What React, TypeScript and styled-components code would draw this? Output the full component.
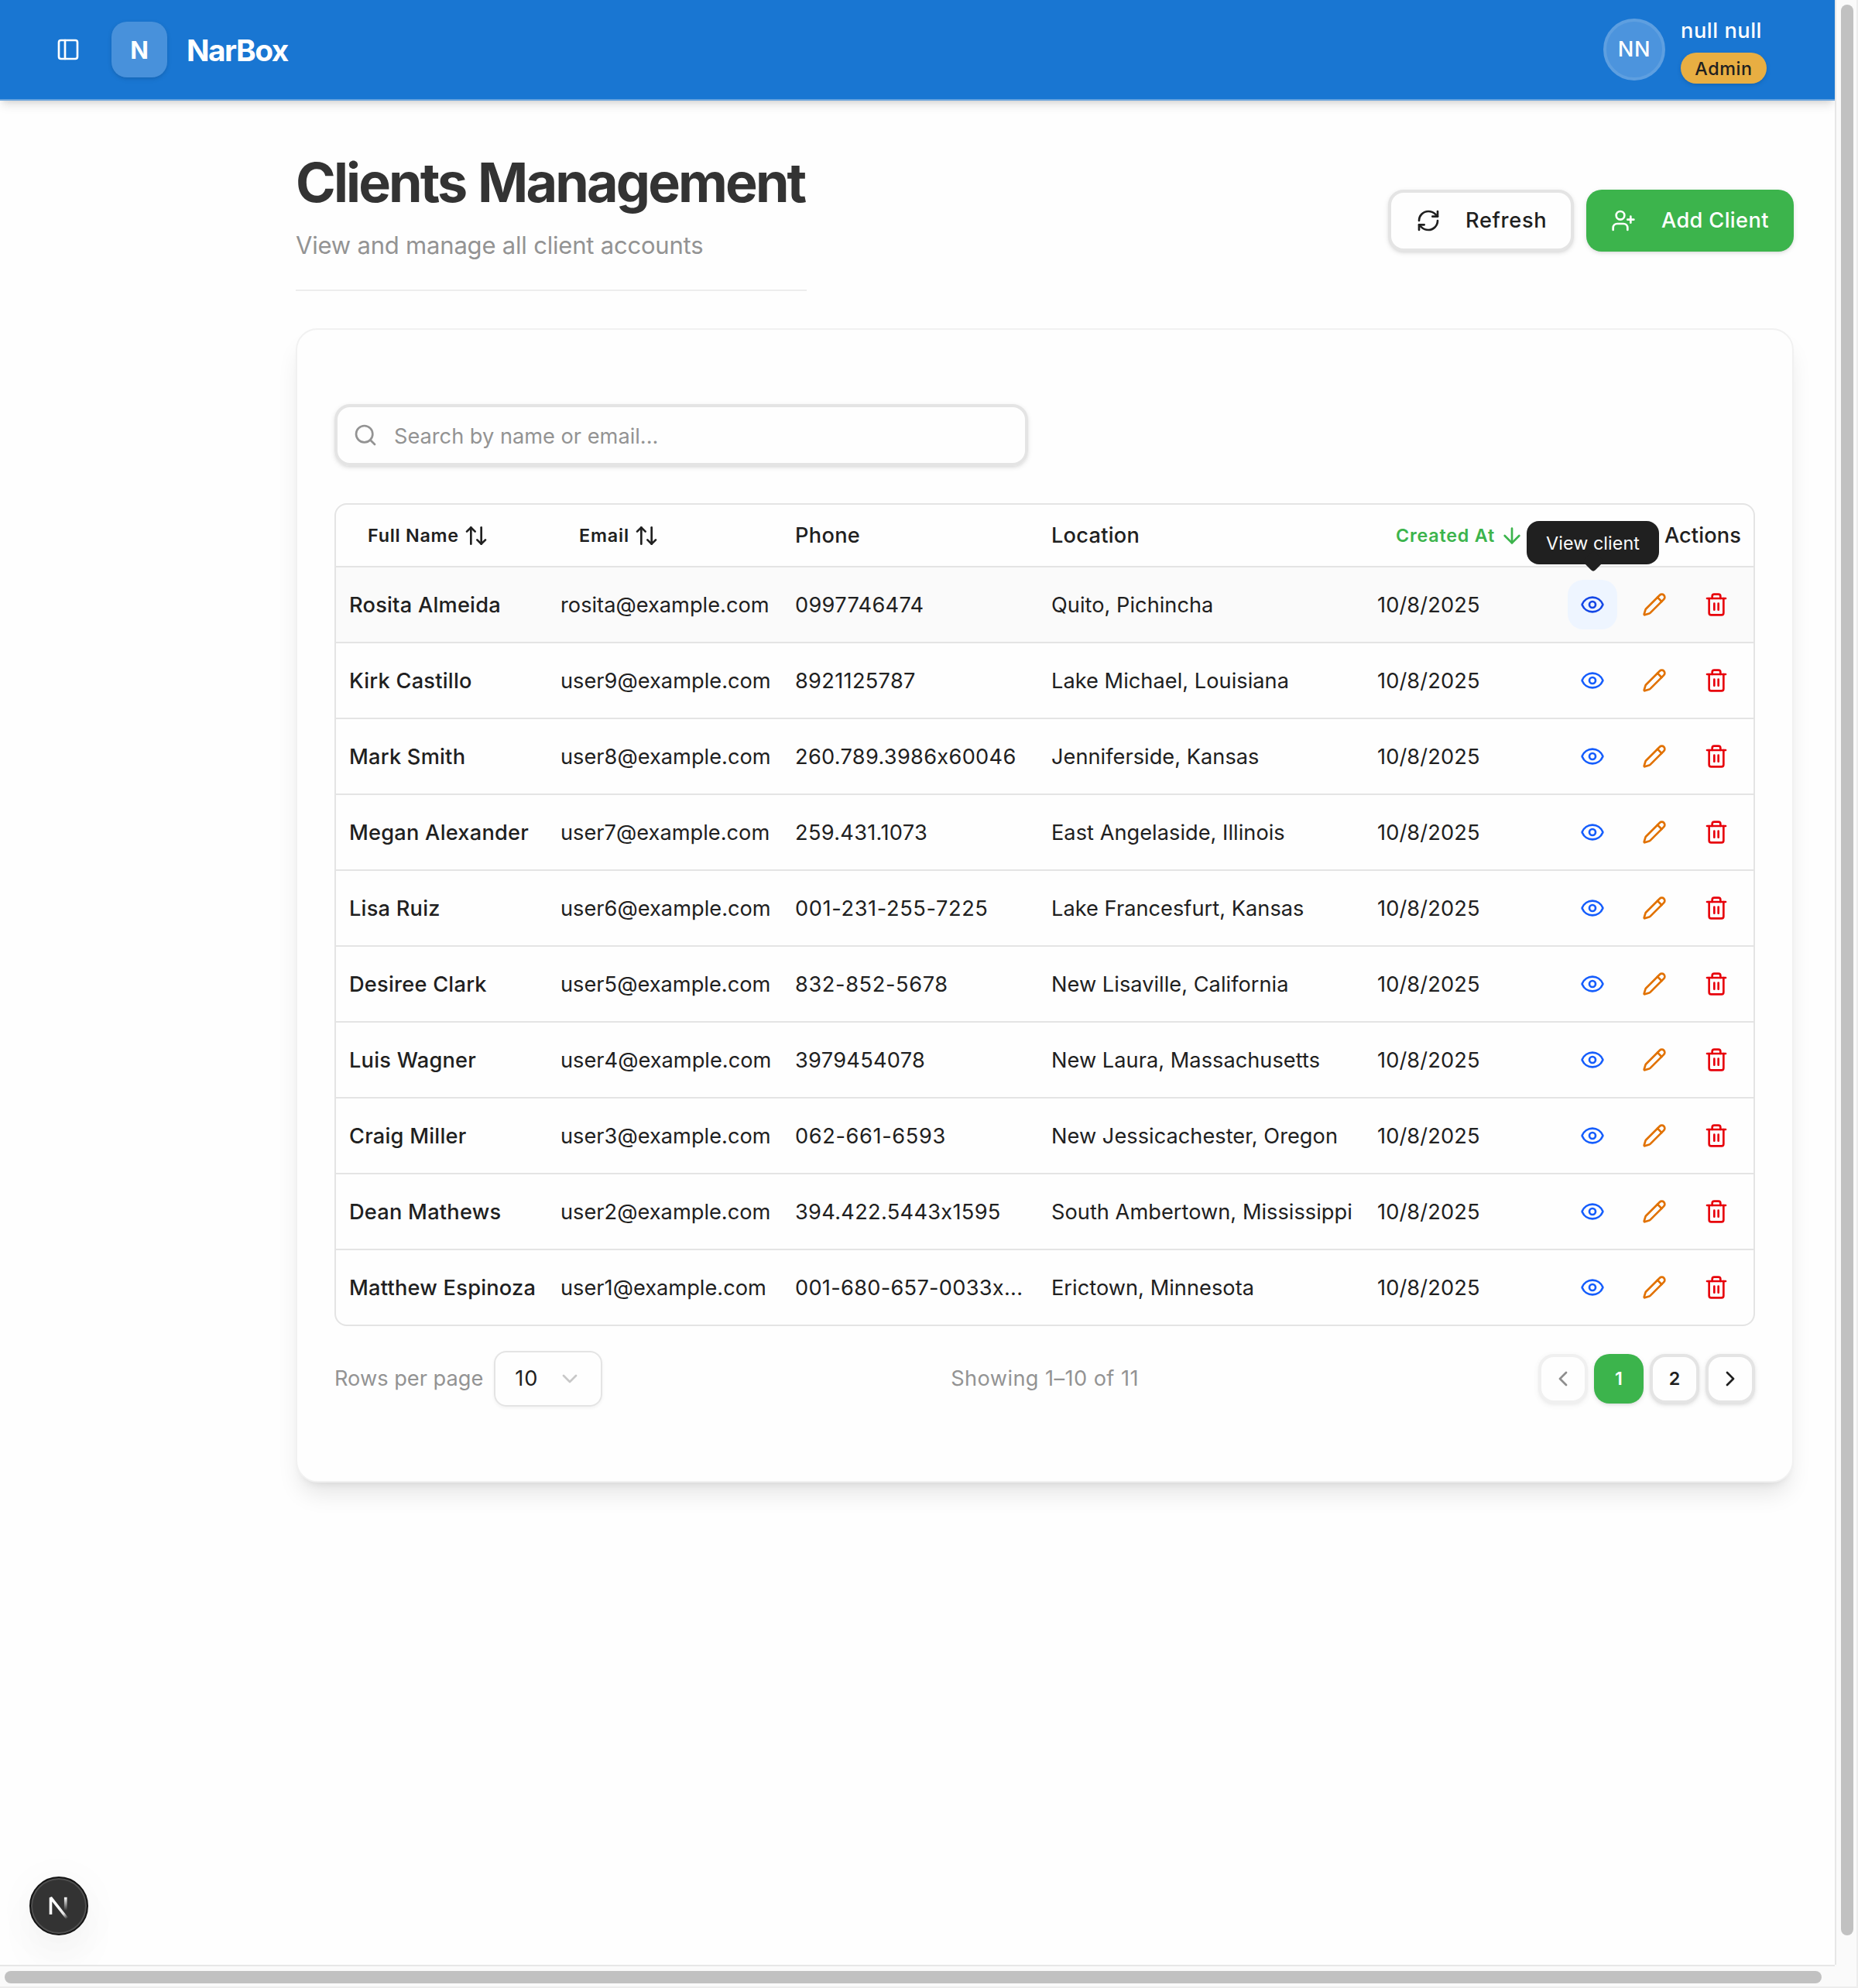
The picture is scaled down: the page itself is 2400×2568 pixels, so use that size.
import React from "react";
import styled, { createGlobalStyle } from "styled-components";
import {
  ArrowDown,
  ArrowUpDown,
  ChevronDown,
  ChevronLeft,
  ChevronRight,
  Eye,
  PanelLeft,
  Pencil,
  RefreshCw,
  Search,
  Trash2,
  UserPlus,
} from "lucide-react";

const c = {
  primary: "#1976d2",
  green: "#3cb44c",
  text: "#202020",
  heading: "#333333",
  muted: "#939393",
  border: "#e4e4e4",
  page: "#fefefe",
};

const GlobalStyle = createGlobalStyle`
  *, *::before, *::after { box-sizing: border-box; }
  body { margin: 0; background: ${c.page}; }
  button, input { font: inherit; letter-spacing: inherit; color: inherit; margin: 0; }
`;

const Shell = styled.div`
  display: grid;
  grid-template-columns: 2370px 30px;
  grid-template-rows: 2538px 30px;
  width: 2400px;
  height: 2568px;
  overflow: hidden;
  background: ${c.page};
  color: ${c.text};
  font-family: Inter, "Liberation Sans", sans-serif;
  font-size: 27.2px;
  line-height: 40px;
  white-space: nowrap;
`;

const Viewport = styled.div`
  position: relative;
  overflow: hidden;
`;

const Text = styled.span<{ $ls?: number }>`
  letter-spacing: ${(p) => p.$ls ?? 0}px;
`;

/* ---------- top bar ---------- */

const TopBar = styled.header`
  position: relative;
  display: flex;
  align-items: center;
  height: 130px;
  padding: 0 88px 0 72px;
  background: ${c.primary};
  border-bottom: 2px solid #68a3dd;
  color: #fff;
  box-shadow: 0 8px 12px -2px rgba(0, 0, 0, 0.1), 0 4px 8px -4px rgba(0, 0, 0, 0.12);
`;

const Logo = styled.div`
  display: grid;
  place-items: center;
  width: 72px;
  height: 72px;
  margin: 0 25px 0 40px;
  padding-top: 1px;
  border-radius: 20px;
  background: #4891db;
  box-shadow: 0 2px 6px rgba(0, 0, 0, 0.1), 0 2px 4px -2px rgba(0, 0, 0, 0.1);
  font-size: 31px;
  font-weight: 650;
`;

const Brand = styled.div`
  flex: 1;
  font-size: 38.8px;
  font-weight: 700;
  letter-spacing: -1.5px;
  line-height: 56px;
  padding-top: 2px;
`;

const Avatar = styled.div`
  display: grid;
  place-items: center;
  width: 80px;
  height: 80px;
  margin-right: 20px;
  border: 4px solid #5e9fe0;
  border-radius: 50%;
  background: #4c94dd;
  font-weight: 540;
`;

const Account = styled.div`
  display: flex;
  flex-direction: column;
  align-items: flex-start;
  gap: 8px;
  font-weight: 540;
`;

const AccountName = styled.div`
  line-height: 40px;
`;

const Badge = styled.div`
  width: 111px;
  height: 40px;
  border-radius: 20px;
  background: #e8ae42;
  color: ${c.text};
  box-shadow: 0 2px 6px rgba(0, 0, 0, 0.1), 0 2px 4px -2px rgba(0, 0, 0, 0.1);
  font-size: 23.3px;
  letter-spacing: 0.6px;
  line-height: 41px;
  text-align: center;
`;

/* ---------- page ---------- */

const Main = styled.main`
  padding: 64px 53px 0 382px;
`;

const PageHead = styled.div`
  display: flex;
  align-items: center;
  justify-content: space-between;
`;

const TitleBlock = styled.div`
  width: 660px;
  padding-bottom: 32px;
  border-bottom: 2px solid #ededed;
`;

const Title = styled.h1`
  margin: 0;
  color: ${c.heading};
  font-size: 70px;
  font-weight: 700;
  letter-spacing: -2.85px;
  line-height: 84px;
  word-spacing: 2px;
`;

const Subtitle = styled.p`
  margin: 14px 0 0;
  color: ${c.muted};
  font-size: 31px;
  letter-spacing: -0.2px;
  line-height: 50px;
`;

const Actions = styled.div`
  display: flex;
  gap: 16px;
`;

const Button = styled.button<{ $primary?: boolean }>`
  display: flex;
  align-items: center;
  gap: ${(p) => (p.$primary ? 33 : 32)}px;
  width: ${(p) => (p.$primary ? 268 : 240)}px;
  height: 80px;
  padding: 0 32px;
  border: ${(p) => (p.$primary ? "0" : `4px solid ${c.border}`)};
  border-radius: 20px;
  background: ${(p) => (p.$primary ? c.green : c.page)};
  color: ${(p) => (p.$primary ? "#fff" : c.text)};
  box-shadow: 0 2px 6px rgba(0, 0, 0, 0.1), 0 2px 4px -2px rgba(0, 0, 0, 0.1);
  font-weight: 550;

  svg { flex: none; }
`;

const Card = styled.section`
  margin-top: 48px;
  padding: 96px 48px;
  border: 2px solid #f1f1f1;
  border-radius: 28px;
  background: ${c.page};
  box-shadow: 0 20px 30px -6px rgba(0, 0, 0, 0.1), 0 8px 12px -8px rgba(0, 0, 0, 0.1);
`;

const SearchBox = styled.label`
  display: flex;
  align-items: center;
  gap: 21px;
  width: 896px;
  height: 80px;
  padding: 0 20px;
  border: 4px solid ${c.border};
  border-radius: 20px;
  color: ${c.muted};
  box-shadow: 0 2px 6px rgba(0, 0, 0, 0.1), 0 2px 4px -2px rgba(0, 0, 0, 0.1);
`;

const SearchInput = styled.input`
  flex: 1;
  padding: 3px 0 0;
  border: 0;
  outline: 0;
  background: transparent;

  &::placeholder { color: ${c.muted}; opacity: 1; }
`;

/* ---------- table ---------- */

const Table = styled.div`
  margin-top: 48px;
  border: 2px solid ${c.border};
  border-radius: 16px;
`;

const Row = styled.div<{ $active?: boolean }>`
  display: grid;
  grid-template-columns: 273px 303px 331px 421px 1fr auto;
  align-items: center;
  height: 98px;
  padding-left: 1px;
  border-bottom: 2px solid ${c.border};
  background: ${(p) => (p.$active ? "#fafafa" : "transparent")};

  &:last-child { height: 96px; border-bottom: 0; }
`;

const HeadRow = styled(Row)`
  height: 81px;
  padding-top: 1px;
  font-weight: 480;
`;

const Cell = styled.div<{ $strong?: boolean; $ls?: number }>`
  padding: 1px 0 0 16px;
  font-weight: ${(p) => (p.$strong ? 480 : 400)};
  letter-spacing: ${(p) => p.$ls ?? 0}px;
`;

const HeadCell = styled.div<{ $ls?: number }>`
  padding: 0 16px;
  letter-spacing: ${(p) => p.$ls ?? 0}px;
`;

const SortButton = styled.button<{ $sorted?: boolean; $ls: number }>`
  display: flex;
  align-items: center;
  gap: 6px;
  padding: 0 24px;
  border: 0;
  background: none;
  color: ${(p) => (p.$sorted ? c.green : c.text)};
  font-size: 23.3px;
  font-weight: 560;
  letter-spacing: ${(p) => p.$ls}px;
`;

const RowActions = styled.div`
  display: flex;
  gap: 16px;
  padding-right: 16px;
`;

const IconButton = styled.button<{ $tone: string; $hover?: boolean }>`
  position: relative;
  display: grid;
  place-items: center;
  width: 64px;
  height: 64px;
  padding: 0;
  border: 0;
  border-radius: 20px;
  background: ${(p) => (p.$hover ? "#eef5ff" : "transparent")};
  color: ${(p) => p.$tone};
`;

const Tooltip = styled.span`
  position: absolute;
  bottom: 84px;
  left: 33px;
  width: 171px;
  height: 56px;
  margin-left: -86px;
  border-radius: 16px;
  background: ${c.text};
  color: #fafafa;
  font-size: 23.3px;
  font-weight: 400;
  letter-spacing: 0.07px;
  line-height: 57px;
  text-align: center;

  &::after {
    content: "";
    position: absolute;
    bottom: -6px;
    left: 50%;
    width: 20px;
    height: 20px;
    margin-left: -10px;
    border-radius: 4px;
    background: ${c.text};
    transform: rotate(45deg);
  }
`;

/* ---------- pagination ---------- */

const Footer = styled.div`
  display: grid;
  grid-template-columns: 1fr auto 1fr;
  align-items: center;
  margin-top: 32px;
  color: ${c.muted};
`;

const PageSize = styled.div`
  display: flex;
  align-items: center;
  gap: 14px;
`;

const Select = styled.div`
  display: flex;
  align-items: center;
  justify-content: space-between;
  width: 140px;
  height: 72px;
  padding: 0 24px 0 25px;
  border: 2px solid ${c.border};
  border-radius: 16px;
  color: ${c.text};
  box-shadow: 0 2px 4px rgba(0, 0, 0, 0.05);

  svg { color: #c8c8c8; }
`;

const Pager = styled.div`
  display: flex;
  justify-content: flex-end;
  gap: 8px;
`;

const PageButton = styled.button<{ $current?: boolean }>`
  display: grid;
  place-items: center;
  width: 64px;
  height: 64px;
  padding: 0;
  border: ${(p) => (p.$current ? "0" : `4px solid ${c.border}`)};
  border-radius: 20px;
  background: ${(p) => (p.$current ? c.green : c.page)};
  color: ${(p) => (p.$current ? "#fff" : c.text)};
  box-shadow: 0 2px 6px rgba(0, 0, 0, 0.1), 0 2px 4px -2px rgba(0, 0, 0, 0.1);
  font-size: 23.3px;
  font-weight: 560;

  &:disabled { opacity: 0.5; }
`;

/* ---------- window chrome ---------- */

const DevBadge = styled.div`
  position: absolute;
  left: 38px;
  bottom: 38px;
  width: 76px;
  height: 76px;
  border: 2px solid #151515;
  border-radius: 50%;
  background: #333;
  box-shadow: inset 0 0 0 2px #505050, 0 32px 64px -16px rgba(0, 0, 0, 0.1),
    0 6px 60px rgba(0, 0, 0, 0.04);

  svg { display: block; margin: -2px; }
`;

const VerticalTrack = styled.div`
  padding: 6px 4px 0 6px;
  border: solid #e7e7e7;
  border-width: 0 2px;
  border-right-color: #ededed;
  background: #fafafa;
`;

const HorizontalTrack = styled.div`
  padding: 6px 0 0 6px;
  border: solid #e7e7e7;
  border-width: 2px 0;
  border-bottom-color: #ededed;
  background: #fafafa;
`;

const Corner = styled.div`
  border: solid #ededed;
  border-width: 0 2px 2px 0;
  background: #fafafa;
`;

const Thumb = styled.div<{ $w: number; $h: number }>`
  width: ${(p) => p.$w}px;
  height: ${(p) => p.$h}px;
  border-radius: 8px;
  background: #c1c1c1;
`;

type Client = {
  name: string;
  email: string;
  phone: string;
  location: string;
};

const clients: Client[] = [
  { name: "Rosita Almeida", email: "rosita@example.com", phone: "0997746474", location: "Quito, Pichincha" },
  { name: "Kirk Castillo", email: "user9@example.com", phone: "8921125787", location: "Lake Michael, Louisiana" },
  { name: "Mark Smith", email: "user8@example.com", phone: "260.789.3986x60046", location: "Jenniferside, Kansas" },
  { name: "Megan Alexander", email: "user7@example.com", phone: "259.431.1073", location: "East Angelaside, Illinois" },
  { name: "Lisa Ruiz", email: "user6@example.com", phone: "001-231-255-7225", location: "Lake Francesfurt, Kansas" },
  { name: "Desiree Clark", email: "user5@example.com", phone: "832-852-5678", location: "New Lisaville, California" },
  { name: "Luis Wagner", email: "user4@example.com", phone: "3979454078", location: "New Laura, Massachusetts" },
  { name: "Craig Miller", email: "user3@example.com", phone: "062-661-6593", location: "New Jessicachester, Oregon" },
  { name: "Dean Mathews", email: "user2@example.com", phone: "394.422.5443x1595", location: "South Ambertown, Mississippi" },
  { name: "Matthew Espinoza", email: "user1@example.com", phone: "001-680-657-0033x...", location: "Erictown, Minnesota" },
];

const phoneSpacing = (phone: string) => {
  if (phone.endsWith("...")) return 0.28;
  return phone.includes("-") ? 0.62 : 0.3;
};

const NextMark = () => (
  <svg width="76" height="76" viewBox="0 0 76 76" fill="none">
    <defs>
      <linearGradient id="diag" x1="38" y1="41" x2="48.5" y2="54.5" gradientUnits="userSpaceOnUse">
        <stop stopColor="#fff" />
        <stop offset="0.55" stopColor="#fff" stopOpacity="0.85" />
        <stop offset="1" stopColor="#fff" stopOpacity="0" />
      </linearGradient>
      <linearGradient id="stem" x1="46.7" y1="27" x2="46.7" y2="44" gradientUnits="userSpaceOnUse">
        <stop stopColor="#fff" />
        <stop offset="1" stopColor="#fff" stopOpacity="0" />
      </linearGradient>
    </defs>
    <path d="M48.6 54 27.5 27.2V49" stroke="url(#diag)" strokeWidth="3.6" strokeLinejoin="bevel" />
    <path d="M44.9 26.8h3.7V45h-3.7z" fill="url(#stem)" />
  </svg>
);

const ClientRow = ({ client, hovered }: { client: Client; hovered: boolean }) => (
  <Row $active={hovered}>
    <Cell $strong $ls={0.24}>{client.name}</Cell>
    <Cell $ls={0.02}>{client.email}</Cell>
    <Cell $ls={phoneSpacing(client.phone)}>{client.phone}</Cell>
    <Cell $ls={0.03}>{client.location}</Cell>
    <Cell $ls={0.12}>10/8/2025</Cell>
    <RowActions>
      <IconButton $tone={hovered ? "#1447e6" : "#155dfc"} $hover={hovered} aria-label="View">
        <Eye size={32} />
        {hovered && <Tooltip>View client</Tooltip>}
      </IconButton>
      <IconButton $tone="#e17100" aria-label="Edit">
        <Pencil size={32} />
      </IconButton>
      <IconButton $tone="#e7000b" aria-label="Delete">
        <Trash2 size={32} />
      </IconButton>
    </RowActions>
  </Row>
);

export default function App() {
  return (
    <Shell>
      <GlobalStyle />
      <Viewport>
        <TopBar>
          <PanelLeft size={32} />
          <Logo>N</Logo>
          <Brand>NarBox</Brand>
          <Avatar>
            <Text $ls={0.6}>NN</Text>
          </Avatar>
          <Account>
            <AccountName>
              <Text $ls={0.55}>null null</Text>
            </AccountName>
            <Badge>Admin</Badge>
          </Account>
        </TopBar>

        <Main>
          <PageHead>
            <TitleBlock>
              <Title>Clients Management</Title>
              <Subtitle>View and manage all client accounts</Subtitle>
            </TitleBlock>
            <Actions>
              <Button>
                <RefreshCw size={32} />
                <Text $ls={0.68}>Refresh</Text>
              </Button>
              <Button $primary>
                <UserPlus size={32} />
                <Text $ls={0.36}>Add Client</Text>
              </Button>
            </Actions>
          </PageHead>

          <Card>
            <SearchBox>
              <Search size={32} />
              <SearchInput placeholder="Search by name or email..." />
            </SearchBox>

            <Table>
              <HeadRow>
                <HeadCell>
                  <SortButton $ls={0.75}>
                    Full Name
                    <ArrowUpDown size={32} />
                  </SortButton>
                </HeadCell>
                <HeadCell>
                  <SortButton $ls={0.88}>
                    Email
                    <ArrowUpDown size={32} />
                  </SortButton>
                </HeadCell>
                <HeadCell $ls={0.32}>Phone</HeadCell>
                <HeadCell $ls={0.25}>Location</HeadCell>
                <HeadCell>
                  <SortButton $sorted $ls={0.8}>
                    Created At
                    <ArrowDown size={32} />
                  </SortButton>
                </HeadCell>
                <HeadCell $ls={0.12}>Actions</HeadCell>
              </HeadRow>
              {clients.map((client, i) => (
                <ClientRow key={client.email} client={client} hovered={i === 0} />
              ))}
            </Table>

            <Footer>
              <PageSize>
                <Text>Rows per page</Text>
                <Select>
                  <Text $ls={0.9}>10</Text>
                  <ChevronDown size={32} />
                </Select>
              </PageSize>
              <Text $ls={0.42}>Showing 1–10 of 11</Text>
              <Pager>
                <PageButton disabled aria-label="Previous page">
                  <ChevronLeft size={32} />
                </PageButton>
                <PageButton $current>1</PageButton>
                <PageButton>2</PageButton>
                <PageButton aria-label="Next page">
                  <ChevronRight size={32} />
                </PageButton>
              </Pager>
            </Footer>
          </Card>
        </Main>

        <DevBadge>
          <NextMark />
        </DevBadge>
      </Viewport>
      <VerticalTrack>
        <Thumb $w={16} $h={2494} />
      </VerticalTrack>
      <HorizontalTrack>
        <Thumb $w={2347} $h={16} />
      </HorizontalTrack>
      <Corner />
    </Shell>
  );
}
